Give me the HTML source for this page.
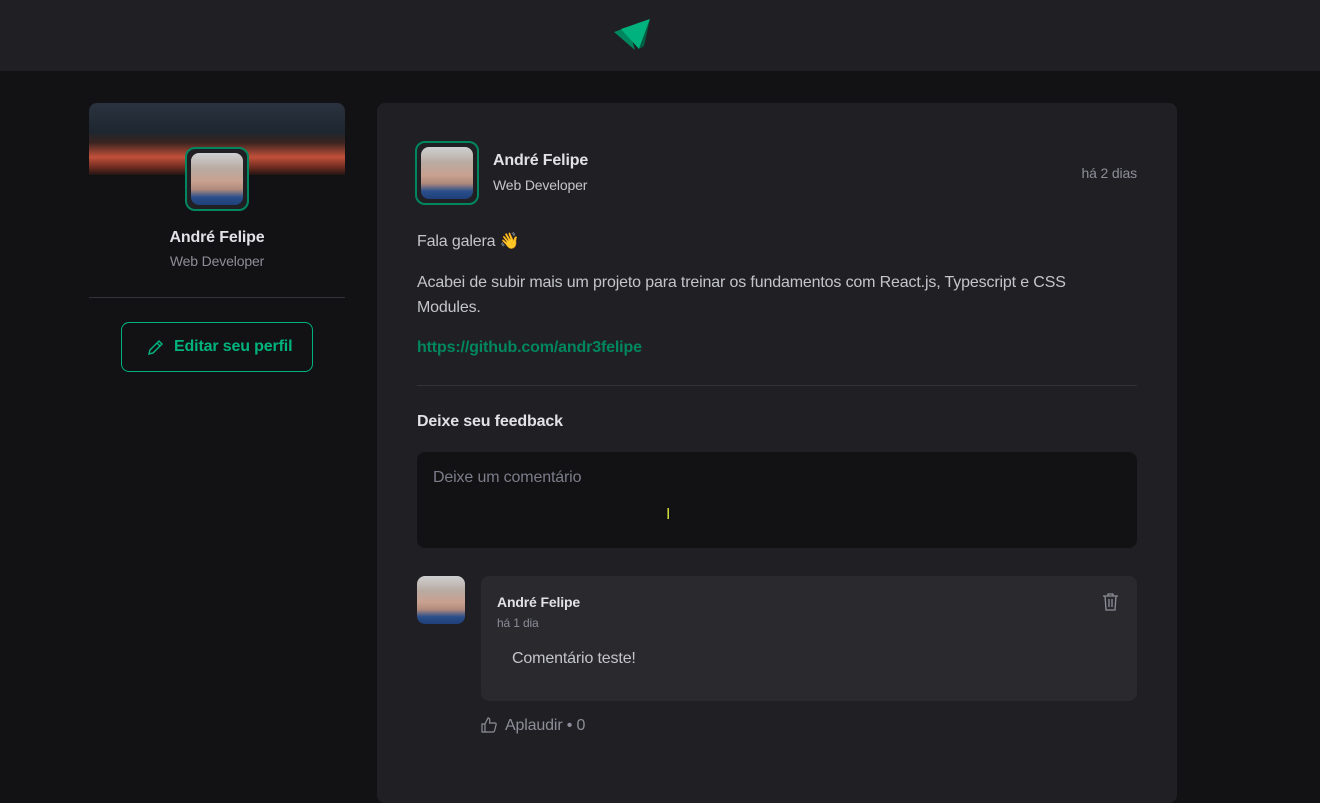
<!DOCTYPE html>
<html><head><meta charset="utf-8"><style>
*{box-sizing:border-box;margin:0;padding:0}
body{width:1320px;height:754px;overflow:hidden;background:#121214;font-family:"Liberation Sans",Arial,sans-serif;color:#e1e1e6;position:relative;letter-spacing:-0.15px}
.hdr{position:absolute;left:0;top:0;width:1320px;height:71px;background:#202024}
.ab{position:absolute}
.av{position:absolute;border-radius:8px;background:linear-gradient(180deg,#cfd0d2 0%,#b9aba2 30%,#c9a08f 55%,#b08a7c 70%,#2a4f8a 85%,#1f3f7a 100%)}
.avb{position:absolute;border:2px solid #00875f;border-radius:10px;background:#202024}
.card{position:absolute;left:377px;top:103px;width:800px;height:700px;background:#202024;border-radius:8px}
</style></head><body>
<div class="hdr"></div>
<svg class="ab" style="left:614px;top:18px" width="38" height="34" viewBox="0 0 38 34"><polygon points="0,14 14,9 21,32" fill="#00875f"/><polygon points="7,11 36,1 25,31" fill="#00b37e"/><polygon points="25,31 36,1 30,28" fill="#015f43"/></svg>

<div class="ab" style="left:89px;top:103px;width:256px;height:72px;border-radius:8px 8px 0 0;background:linear-gradient(180deg,#2b3340 0%,#1e2630 40%,#3a2420 55%,#c2503a 75%,#6a2a1f 90%,#201514 100%)"></div>
<div class="avb" style="left:185px;top:147px;width:64px;height:64px"></div>
<div class="av" style="left:191px;top:153px;width:52px;height:52px"></div>
<div class="ab" style="left:89px;top:229px;width:256px;text-align:center;font-weight:bold;font-size:16px;color:#e1e1e6">André Felipe</div>
<div class="ab" style="left:89px;top:253px;width:256px;text-align:center;font-size:14px;color:#8d8d99">Web Developer</div>
<div class="ab" style="left:89px;top:297px;width:256px;height:1px;background:#323238"></div>
<div class="ab" style="left:121px;top:322px;width:192px;height:50px;border:1px solid #00b37e;border-radius:8px;color:#00b37e;font-weight:bold;font-size:16px;line-height:48px;padding-left:52px">Editar seu perfil</div>
<svg class="ab" style="left:147px;top:338px" width="18" height="18" viewBox="0 0 18 18" fill="none" stroke="#00b37e" stroke-width="1.5"><path d="M2 16 L3 12 L12 3 L15 6 L6 15 Z M10 5 L13 8"/></svg>

<div class="card"></div>
<div class="avb" style="left:415px;top:141px;width:64px;height:64px"></div>
<div class="av" style="left:421px;top:147px;width:52px;height:52px"></div>
<div class="ab" style="left:493px;top:152px;font-weight:bold;font-size:16px">André Felipe</div>
<div class="ab" style="left:493px;top:177px;font-size:14px;color:#c4c4cc">Web Developer</div>
<div class="ab" style="left:1000px;top:165px;width:137px;text-align:right;font-size:14px;color:#8d8d99">há 2 dias</div>
<div class="ab" style="left:417px;top:231px;font-size:16px;color:#c4c4cc">Fala galera 👋</div>
<div class="ab" style="left:417px;top:270px;width:700px;font-size:16px;line-height:25px;color:#c4c4cc">Acabei de subir mais um projeto para treinar os fundamentos com React.js, Typescript e CSS Modules.</div>
<div class="ab" style="left:417px;top:339px;font-size:16px;font-weight:bold;color:#00875f">https://github.com/andr3felipe</div>
<div class="ab" style="left:417px;top:385px;width:720px;height:1px;background:#323238"></div>
<div class="ab" style="left:417px;top:413px;font-size:16px;font-weight:bold">Deixe seu feedback</div>
<div class="ab" style="left:417px;top:452px;width:720px;height:96px;background:#121214;border-radius:8px;padding:17px 16px;font-size:16px;color:#7c7c8a">Deixe um comentário</div>
<div class="ab" style="left:666px;top:506px;font-size:16px;color:#d0e040">I</div>

<div class="av" style="left:417px;top:576px;width:48px;height:48px"></div>
<div class="ab" style="left:481px;top:576px;width:656px;height:125px;background:#29292e;border-radius:8px"></div>
<div class="ab" style="left:497px;top:594px;font-size:14px;font-weight:bold">André Felipe</div>
<div class="ab" style="left:497px;top:616px;font-size:12px;color:#8d8d99">há 1 dia</div>
<svg class="ab" style="left:1102px;top:593px" width="17" height="18" viewBox="0 0 17 18" fill="none" stroke="#8d8d99" stroke-width="1.3"><path d="M1 3H16M6 3V1H11V3M3 3L4 17H13L14 3M7 6V14M10 6V14"/></svg>
<div class="ab" style="left:512px;top:650px;font-size:16px;color:#c4c4cc">Comentário teste!</div>
<svg class="ab" style="left:481px;top:717px" width="16" height="16" viewBox="0 0 16 16" fill="none" stroke="#8d8d99" stroke-width="1.2"><path d="M1 7H4V15H1Z M4 7L7 1C9 1 9 3 8.5 6H14C15 6 15.5 7 15 8L13.5 14C13 15 12.5 15 12 15H4"/></svg>
<div class="ab" style="left:505px;top:717px;font-size:16px;color:#8d8d99">Aplaudir • 0</div>
</body></html>
